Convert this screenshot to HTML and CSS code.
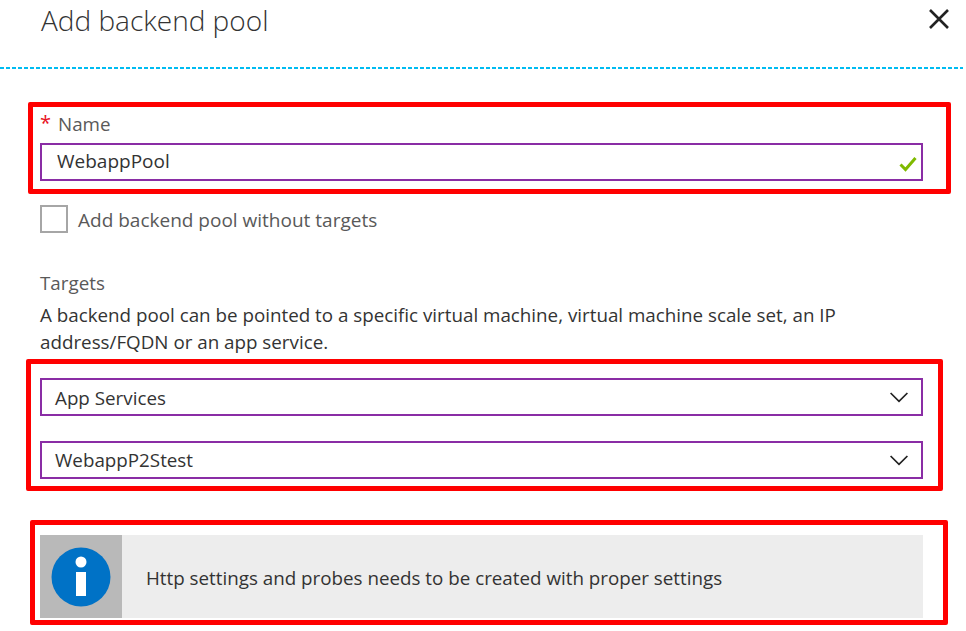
FILE: index.html
```html
<!DOCTYPE html>
<html lang="en">
<head>
    <meta charset="UTF-8">
    <title>Add backend pool</title>
    <link rel="stylesheet" href="styles.css">
</head>
<body>
    <header class="blade-header">
        <h1 class="blade-title">Add backend pool</h1>
        <button class="close-btn" aria-label="Close">
            <svg width="20" height="20" fill="none" stroke="#222" stroke-width="2.6">
                <path d="M1 1l18 18M19 1L1 19"/>
            </svg>
        </button>
    </header>
    <div class="dash-rule"></div>

    <section class="mark mark-name">
        <label class="field-label"><span class="required">*</span>Name</label>
        <div class="input-box name-input">
            <span>WebappPool</span>
            <svg width="18" height="16" fill="none" stroke="#7fba00" stroke-width="3">
                <path d="M1.5 8.5l5 5L16.5 2"/>
            </svg>
        </div>
    </section>

    <div class="check-row">
        <span class="checkbox"></span>
        <span class="check-text">Add backend pool without targets</span>
    </div>

    <div class="targets-label">Targets</div>
    <p class="targets-text">A backend pool can be pointed to a specific virtual machine, virtual machine scale set, an IP address/FQDN or an app service.</p>

    <section class="mark mark-targets">
        <div class="input-box select-box">
            <span>App Services</span>
            <svg width="18" height="11" fill="none" stroke="#222" stroke-width="1.7">
                <path d="M.6 1l8.4 8.4L17.4 1"/>
            </svg>
        </div>
        <div class="input-box select-box">
            <span class="select-low">WebappP2Stest</span>
            <svg width="18" height="11" fill="none" stroke="#222" stroke-width="1.7">
                <path d="M.6 1l8.4 8.4L17.4 1"/>
            </svg>
        </div>
    </section>

    <section class="mark mark-info">
        <div class="info-bar">
            <div class="info-icon">
                <svg width="60" height="60">
                    <circle cx="30" cy="30" r="29.5" fill="#0072c6"/>
                    <circle cx="30" cy="15" r="5.5" fill="#fff"/>
                    <rect x="25" y="25" width="10" height="24" fill="#fff"/>
                </svg>
            </div>
            <div class="info-text">Http settings and probes needs to be created with proper settings</div>
        </div>
    </section>
</body>
</html>
```

FILE: styles.css
```css
* {
    margin: 0;
    padding: 0;
    box-sizing: border-box;
}

body {
    font-family: "Open Sans", "Noto Sans", sans-serif;
    font-size: 18.8px;
    color: #333;
    background-color: #fff;
    overflow: hidden;
    height: 631px;
}

.blade-header {
    height: 67px;
    padding: 0 17px 0 41px;
    display: flex;
    justify-content: space-between;
    align-items: flex-start;
}

.blade-title {
    font-size: 28px;
    font-weight: 300;
    line-height: 41px;
    color: #333;
}

.close-btn {
    margin-top: 9px;
    width: 20px;
    height: 20px;
    background: none;
    border: none;
}

.close-btn svg {
    display: block;
}

.dash-rule {
    width: 963px;
    height: 2px;
    background: repeating-linear-gradient(to right, #00bcf2 0, #00bcf2 4px, transparent 4px, transparent 6px);
}

.mark {
    border: 5px solid #f00;
    border-radius: 2px;
}

.mark-name {
    margin: 33px 0 0 28px;
    width: 923px;
    height: 92px;
    padding: 0 23px 0 7px;
}

.field-label {
    height: 36px;
    padding-bottom: 2px;
    display: flex;
    align-items: center;
    color: #595959;
}

.required {
    width: 18px;
    color: #e81123;
    font-size: 20px;
    margin-bottom: 4px;
}

.input-box {
    height: 38px;
    border: 2px solid #8a2da5;
    display: flex;
    align-items: center;
    justify-content: space-between;
    color: #333;
}

.name-input {
    padding: 0 4px 2px 15px;
    font-size: 19px;
}

.name-input svg {
    margin-top: 5px;
}

.check-row {
    margin: 11px 0 0 40px;
    height: 28px;
    display: flex;
    align-items: center;
    gap: 10px;
    color: #595959;
    font-size: 19px;
}

.check-text {
    padding-top: 2px;
}

.checkbox {
    width: 28px;
    height: 28px;
    border: 2px solid #a6a6a6;
}

.targets-label {
    margin: 37px 0 0 40px;
    line-height: 27px;
    color: #595959;
}

.targets-text {
    margin: 5px 0 0 40px;
    width: 860px;
    line-height: 27px;
}

.mark-targets {
    margin: 3px 0 0 26px;
    width: 917px;
    height: 132px;
    padding: 14px 15px 0 9px;
    display: flex;
    flex-direction: column;
    gap: 25px;
}

.select-box {
    padding: 2px 13px 0 13px;
}

.select-box svg {
    margin-top: -2px;
}

.select-low {
    margin-top: -2px;
}

.mark-info {
    margin: 29px 0 0 30px;
    width: 918px;
    height: 105px;
    padding: 10px 20px 0 5px;
}

.info-bar {
    height: 83px;
    background-color: #ededed;
    display: flex;
    align-items: center;
}

.info-icon {
    width: 82px;
    height: 83px;
    background-color: #b9b9b9;
    display: flex;
    align-items: center;
    justify-content: center;
}

.info-text {
    margin-left: 24px;
    padding-top: 2px;
    color: #333;
}
```
